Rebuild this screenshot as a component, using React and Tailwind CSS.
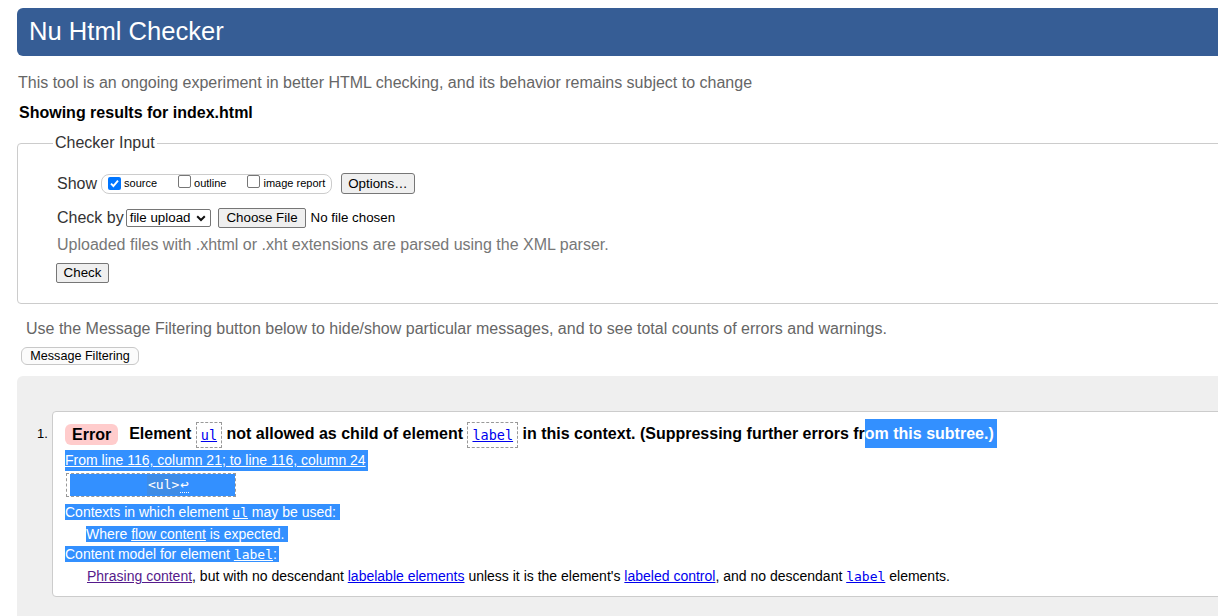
const CB = ({ checked }) =>
  checked ? (
    <span className="inline-flex w-[13px] h-[13px] rounded-[2px] bg-[#0075ff] items-center justify-center shrink-0">
      <svg width="11" height="11" viewBox="0 0 11 11">
        <path d="M2 5.6 L4.4 8 L9 2.6" fill="none" stroke="white" strokeWidth="1.9" />
      </svg>
    </span>
  ) : (
    <span className="inline-block w-[13px] h-[13px] rounded-[2px] border border-[#767676] bg-white shrink-0" />
  );

const Code = ({ children }) => (
  <span className="inline-block align-middle h-[26px] leading-[24px] border border-dashed border-[#999] px-[4px] font-['DejaVu_Sans_Mono',monospace] font-normal text-[13.5px] text-[#0000ee] underline">
    {children}
  </span>
);

const M = ({ children, cls = "" }) => (
  <span className={"font-['DejaVu_Sans_Mono',monospace] text-[13px] leading-[16px] underline " + cls}>{children}</span>
);

export default function App() {
  return (
    <div className="w-[1218px] h-[616px] overflow-hidden bg-white font-['Liberation_Sans',Arial,sans-serif] text-black">
      <div className="w-[1290px] pl-[17px] pt-[8px]">
        <div className="h-[48px] bg-[#365d95] rounded-[6px] flex items-center pl-[12px] text-white text-[25.6px] leading-none">
          Nu Html Checker
        </div>
        <p className="mt-[18px] ml-px text-[16px] leading-[18px] text-[#666]">
          This tool is an ongoing experiment in better HTML checking, and its behavior remains subject to change
        </p>
        <p className="mt-[12px] ml-[2px] font-bold text-[16px] leading-[18px]">Showing results for index.html</p>

        <fieldset className="mt-[12px] border border-[#ccc] rounded-[4px] p-0 m-0">
          <legend className="ml-[35px] px-[2px] text-[16px] leading-[18px] text-[#333]">Checker Input</legend>
          <div className="pl-[39px] pt-[20px] pb-[20px] text-[#333]">
            <div className="flex items-center h-[23px]">
              <span className="text-[16px] leading-[18px]">Show</span>
              <div className="ml-[4px] h-[20px] border border-[#ccc] rounded-[8px] flex items-center pl-[6px] pr-[6px] text-[11px] text-black">
                <CB checked />
                <span className="ml-[3px]">source</span>
                <span className="ml-[21px]"><CB /></span>
                <span className="ml-[3px]">outline</span>
                <span className="ml-[21px]"><CB /></span>
                <span className="ml-[3px]">image report</span>
              </div>
              <button className="ml-[9px] h-[21px] px-[6px] border border-[#767676] bg-[#efefef] rounded-[3px] text-[13.33px] text-black leading-none">
                Options…
              </button>
            </div>
            <div className="flex items-center h-[20px] mt-[13px]">
              <span className="text-[16px] leading-[18px]">Check by</span>
              <div className="ml-[2px] h-[18px] border border-[#767676] rounded-[2px] flex items-center pl-[3px] pr-[4px] text-[13.33px] text-black">
                <span>file upload</span>
                <svg className="ml-[6px]" width="10" height="7" viewBox="0 0 10 7">
                  <path d="M1.2 1.3 L5 5 L8.8 1.3" fill="none" stroke="#111" strokeWidth="2" />
                </svg>
              </div>
              <button className="ml-[7px] h-[20px] px-[7px] border border-[#767676] bg-[#efefef] rounded-[2px] text-[13.33px] text-black leading-none">
                Choose File
              </button>
              <span className="ml-[5px] text-[13.33px] text-black">No file chosen</span>
            </div>
            <p className="mt-[8px] text-[16px] leading-[18px] text-[#777]">
              Uploaded files with .xhtml or .xht extensions are parsed using the XML parser.
            </p>
            <button className="block mt-[9px] -ml-px h-[20px] w-[53px] border border-[#767676] bg-[#efefef] rounded-[2px] text-[13.33px] text-black leading-none">
              Check
            </button>
          </div>
        </fieldset>

        <p className="mt-[16px] ml-[9px] text-[16px] leading-[18px] text-[#666]">
          Use the Message Filtering button below to hide/show particular messages, and to see total counts of errors and warnings.
        </p>
        <button className="block mt-[9px] ml-[4px] h-[18px] w-[118px] border border-[#c8c8c8] bg-[#fbfbfb] rounded-[6px] text-[12.6px] text-black leading-none">
          Message Filtering
        </button>

        <div className="mt-[11px] h-[260px] bg-[#efefef] rounded-tl-[6px] flex pt-[35px] pl-[20px]">
          <div className="w-[15px] mt-[8px] leading-[29px] text-[13px]">1.</div>
          <div className="flex-1 self-start bg-white border border-[#ccc] rounded-[4px] pl-[12px] pt-[7px] pb-[11px]">
            <div className="h-[29px] leading-[29px] whitespace-nowrap font-bold text-[16px]">
              <span className="inline-block align-middle h-[21px] leading-[21px] px-[7px] bg-[#fcc] rounded-[6px] text-[16px]">
                Error
              </span>
              <span className="ml-[11px]">Element </span>
              <Code>ul</Code>
              <span> not allowed as child of element </span>
              <Code>label</Code>
              <span> in this context. (Suppressing further errors fr</span>
              <span className="inline-block bg-[#3390ff] text-white pr-[3px]">om this subtree.)</span>
            </div>

            <div className="mt-[2px] text-[14px] leading-[21px]">
              <span className="inline-block bg-[#3390ff] text-white underline pr-[2px]">
                From line 116, column 21; to line 116, column 24
              </span>
            </div>

            <div className="mt-[2px] ml-[1px] flex">
              <div className="h-[24px] border border-dashed border-[#999] pl-[3px] flex">
                <div className="w-[165px] bg-[#3390ff] flex items-center pl-[77px] font-['DejaVu_Sans_Mono',monospace] text-[13px] text-white">
                  <span className="bg-[#3f8ce6] px-[1px]">&lt;ul&gt;</span>
                  <span className="border-b border-dotted border-white leading-[15px] text-[14px]">↩</span>
                </div>
              </div>
            </div>

            <div className="mt-[6px] text-[14px] leading-[18px]">
              <span className="bg-[#3390ff] text-white pr-[4px]">
                Contexts in which element <M>ul</M> may be used:
              </span>
            </div>
            <div className="mt-[4px] ml-[21px] text-[14px] leading-[18px]">
              <span className="bg-[#3390ff] text-white pr-[4px]">
                Where <span className="underline">flow content</span> is expected.
              </span>
            </div>
            <div className="mt-[2px] text-[14px] leading-[18px]">
              <span className="bg-[#3390ff] text-white pr-[2px]">
                Content model for element <M>label</M>:
              </span>
            </div>
            <div className="mt-[4px] ml-[22px] text-[14px] leading-[18px] whitespace-nowrap">
              <span className="underline text-[#551a8b]">Phrasing content</span>, but with no descendant{" "}
              <span className="underline text-[#0000ee]">labelable elements</span> unless it is the element's{" "}
              <span className="underline text-[#0000ee]">labeled control</span>, and no descendant{" "}
              <M cls="text-[#0000ee]">label</M> elements.
            </div>
          </div>
        </div>
      </div>
    </div>
  );
}
